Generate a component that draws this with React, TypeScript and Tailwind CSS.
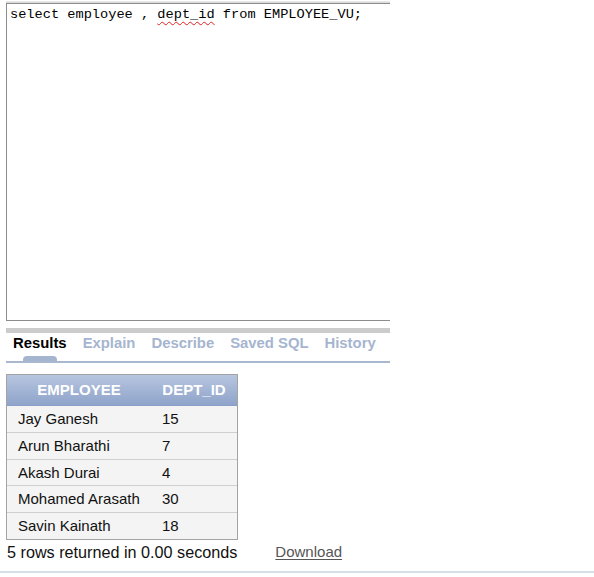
import React from "react";

const rows: [string, string][] = [
  ["Jay Ganesh", "15"],
  ["Arun Bharathi", "7"],
  ["Akash Durai", "4"],
  ["Mohamed Arasath", "30"],
  ["Savin Kainath", "18"],
];

const rowH = ["h-[27px]", "h-[27px]", "h-[26px]", "h-[27px]", "h-[26px]"];

const tabs = ["Results", "Explain", "Describe", "Saved SQL", "History"];

export default function App() {
  return (
    <div
      className="w-[594px] h-[577px] bg-white flex flex-col text-[#222]"
      style={{ fontFamily: '"Liberation Sans", Arial, sans-serif' }}
    >
      {/* editor */}
      <div className="ml-[6px] w-[384px] h-[2px] mt-[1px] bg-gradient-to-b from-[#f0f0f0] to-[#d4d4d4]" />
      <div
        className="ml-[6px] w-[384px] h-[318px] border-l border-t border-b border-[#8c8c8c] pl-[3px] pt-[2px] text-[13.65px] leading-[18px] text-black whitespace-pre"
        style={{ fontFamily: '"Liberation Mono", "Courier New", monospace' }}
      >
        {"select employee , "}
        <span className="underline decoration-wavy decoration-[#e02020] decoration-1 underline-offset-[3px]">dept_id</span>
        {" from EMPLOYEE_VU;"}
      </div>

      {/* gray bar */}
      <div className="ml-[6px] mt-[7px] w-[384px] h-[5px] bg-[#cccccc]" />

      {/* tabs */}
      <div className="ml-[6px] w-[384px] flex flex-col">
        <div className="flex h-[28px] pl-[7px] gap-[16px] text-[14.85px] font-bold leading-[20px]">
          {tabs.map((t, i) => (
            <div key={t} className="flex flex-col items-center">
              <span className={i === 0 ? "text-black" : "text-[#a5b5cf]"}>{t}</span>
              {i === 0 && <div className="mt-[3px] w-[34px] h-[5px] rounded-t-[4px] bg-[#a5b5cf]" />}
            </div>
          ))}
        </div>
        <div className="h-[2px] bg-[#a9b7cf]" />
      </div>

      {/* table */}
      <div className="ml-[6px] mt-[11px] w-[232px] border border-[#a3a3a3] text-[15px]">
        <div className="flex h-[31px] items-center bg-gradient-to-b from-[#b7c5df] to-[#8fa4ca] border-b border-[#8aa0c8] text-white font-bold">
          <div className="w-[144px] text-center">EMPLOYEE</div>
          <div className="flex-1 text-center">DEPT_ID</div>
        </div>
        {rows.map(([n, d], i) => (
          <div
            key={n}
            className={`flex ${rowH[i]} items-center pt-[1px] bg-[#f4f4f4] text-[#111] ${i < rows.length - 1 ? "border-b border-[#cfcfcf]" : ""}`}
          >
            <div className="w-[144px] pl-[11px]">{n}</div>
            <div className="flex-1 pl-[11px]">{d}</div>
          </div>
        ))}
      </div>

      {/* status */}
      <div className="flex items-center mt-[3px] h-[19px]">
        <span className="ml-[7px] text-[16.2px] leading-[19px] text-[#111]">5 rows returned in 0.00 seconds</span>
        <span className="ml-[38px] text-[15px] text-[#555] underline underline-offset-[2px]">Download</span>
      </div>

      <div className="mt-[9px] w-[594px] h-[2px] bg-[#d6dee6]" />
    </div>
  );
}
